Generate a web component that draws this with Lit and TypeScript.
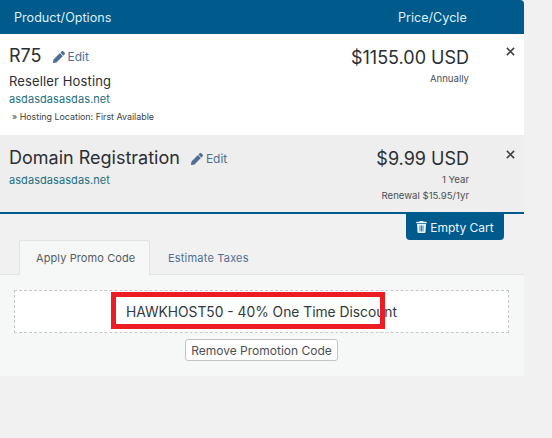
import { LitElement, html, css } from "lit";
import { customElement } from "lit/decorators.js";

const pencil = html`<svg class="pen" viewBox="0 0 512 512"><path fill="currentColor" d="M497.9 142.1l-46.1 46.1c-4.7 4.7-12.3 4.7-17 0l-111-111c-4.7-4.7-4.7-12.3 0-17l46.1-46.1c18.7-18.7 49.1-18.7 67.9 0l60.1 60.1c18.8 18.7 18.8 49.1 0 67.9zM284.2 99.8L21.6 362.4.4 483.9c-2.9 16.4 11.4 30.6 27.8 27.8l121.5-21.3 262.6-262.6c4.7-4.7 4.7-12.3 0-17l-111-111c-4.8-4.7-12.4-4.7-17.1 0z"/></svg>`;
const trash = html`<svg class="trash" viewBox="0 0 448 512"><path fill="currentColor" d="M432 32H312l-9.4-18.7A24 24 0 0 0 281.1 0H166.8a23.7 23.7 0 0 0-21.4 13.3L136 32H16A16 16 0 0 0 0 48v32a16 16 0 0 0 16 16h416a16 16 0 0 0 16-16V48a16 16 0 0 0-16-16zM53.2 467a48 48 0 0 0 47.9 45h245.8a48 48 0 0 0 47.9-45L416 128H32zM144 192h32v256h-32zm64 0h32v256h-32zm64 0h32v256h-32z" fill-rule="evenodd"/></svg>`;

@customElement("app-root")
export class AppRoot extends LitElement {
  static styles = css`
    :host { display: block; height: 438px; background: #f1f1f1; font-family: Inter, "Liberation Sans", sans-serif; color: #2b2f33; overflow: hidden; }
    .cart { width: 524px; display: flex; flex-direction: column; }
    .head { height: 34px; box-sizing: border-box; background: #005a8c; color: #dff1fb; display: grid; grid-template-columns: 1fr 126px; align-items: center; padding-left: 14px; font-size: 12.6px; border-top-right-radius: 4px; }
    .item { display: grid; grid-template-columns: 1fr 186px 55px; padding: 0 0 0 9px; }
    .item.one { background: #fff; height: 101px; box-sizing: border-box; padding-top: 9px; }
    .item.two { background: #eeeeee; height: 77px; box-sizing: border-box; padding-top: 10px; }
    .name-line { display: flex; align-items: center; height: 26px; }
    .name { font-size: 18px; line-height: 26px; color: #2b2f33; }
    .edit { display: inline-flex; align-items: center; gap: 3px; font-size: 12px; color: #4f6e96; margin-left: 11px; margin-top: 1px; }
    .pen { width: 12px; height: 12px; }
    .group { font-size: 13px; line-height: 16px; margin-top: 4px; color: #2b2f33; letter-spacing: 0.13px; }
    .domain { font-size: 11px; line-height: 14px; color: #1d6f7f; letter-spacing: 0.07px; margin-top: 3px; }
    .two .domain { margin-top: 2px; }
    .opt { font-size: 8.9px; line-height: 12px; color: #3d3f42; margin-top: 5px; padding-left: 3px; }
    .price { text-align: right; }
    .one .price { padding-top: 2px; }
    .two .price { padding-top: 1px; }
    .amount { font-size: 18px; line-height: 26px; color: #2b2f33; }
    .cycle { font-size: 9.6px; line-height: 16px; color: #4a4e52; }
    .x { display: flex; justify-content: flex-end; padding-right: 9px; padding-top: 3px; height: 14px; color: #3a3f44; }
    .one .x { padding-top: 2px; }
    .x svg { width: 9px; height: 9px; margin-top: 2px; }
    .rule { height: 2px; background: #005a8c; }
    .actions { display: flex; justify-content: flex-end; padding-right: 20px; height: 26px; }
    .empty { width: 98px; height: 26px; box-sizing: border-box; background: #005a8c; color: #eaf5fb; font-size: 12px; display: flex; align-items: center; justify-content: center; gap: 3px; border-radius: 0 0 4px 4px; }
    .trash { width: 11px; height: 12px; }
    .tabs { display: flex; height: 35px; padding-left: 19px; box-sizing: border-box; position: relative; }
    .tab { font-size: 11px; color: #4f6e96; display: flex; align-items: center; padding: 0 18px; letter-spacing: 0.2px; white-space: nowrap; }
    .tab.on { color: #555b60; background: #f6f7f7; border: 1px solid #e2e2e2; border-bottom: none; border-radius: 3px 3px 0 0; padding: 0 0 0 16px; width: 131px; box-sizing: border-box; position: relative; z-index: 1; letter-spacing: 0.1px; }
    .panel { background: #f6f7f7; border-top: 1px solid #e2e2e2; margin-top: -1px; height: 102px; box-sizing: border-box; padding: 15px 15px 0 14px; display: flex; flex-direction: column; align-items: center; }
    .promo { position: relative; width: 100%; height: 43px; box-sizing: border-box; background: #fff; border: 1px dashed #c4c8ca; display: flex; align-items: center; justify-content: center; font-size: 13.8px; color: #2f3940; }
    .mark { position: absolute; left: 96px; top: 1px; width: 274px; height: 37px; box-sizing: border-box; border: 5px solid #ed1c24; pointer-events: none; }
    .remove { margin-top: 6px; height: 22px; width: 153px; box-sizing: border-box; border: 1px solid #c4c4c4; border-radius: 3px; background: #fff; color: #4c5054; font-size: 12px; display: flex; align-items: center; justify-content: center; white-space: nowrap; }
  `;

  private close() {
    return html`<div class="x"><svg viewBox="0 0 10 10"><path d="M1 1l8 8M9 1l-8 8" stroke="currentColor" stroke-width="1.7" fill="none"/></svg></div>`;
  }

  render() {
    return html`<div class="cart">
      <div class="head"><span>Product/Options</span><span>Price/Cycle</span></div>
      <div class="item one">
        <div>
          <div class="name-line"><span class="name">R75</span><span class="edit">${pencil}Edit</span></div>
          <div class="group">Reseller Hosting</div>
          <div class="domain">asdasdasasdas.net</div>
          <div class="opt">» Hosting Location: First Available</div>
        </div>
        <div class="price"><div class="amount">$1155.00 USD</div><div class="cycle">Annually</div></div>
        ${this.close()}
      </div>
      <div class="item two">
        <div>
          <div class="name-line"><span class="name">Domain Registration</span><span class="edit">${pencil}Edit</span></div>
          <div class="domain">asdasdasasdas.net</div>
        </div>
        <div class="price"><div class="amount">$9.99 USD</div><div class="cycle">1 Year</div><div class="cycle">Renewal $15.95/1yr</div></div>
        ${this.close()}
      </div>
      <div class="rule"></div>
      <div class="actions"><div class="empty">${trash}Empty Cart</div></div>
      <div class="tabs"><div class="tab on">Apply Promo Code</div><div class="tab">Estimate Taxes</div></div>
      <div class="panel">
        <div class="promo">HAWKHOST50 - 40% One Time Discount<div class="mark"></div></div>
        <div class="remove">Remove Promotion Code</div>
      </div>
    </div>`;
  }
}
